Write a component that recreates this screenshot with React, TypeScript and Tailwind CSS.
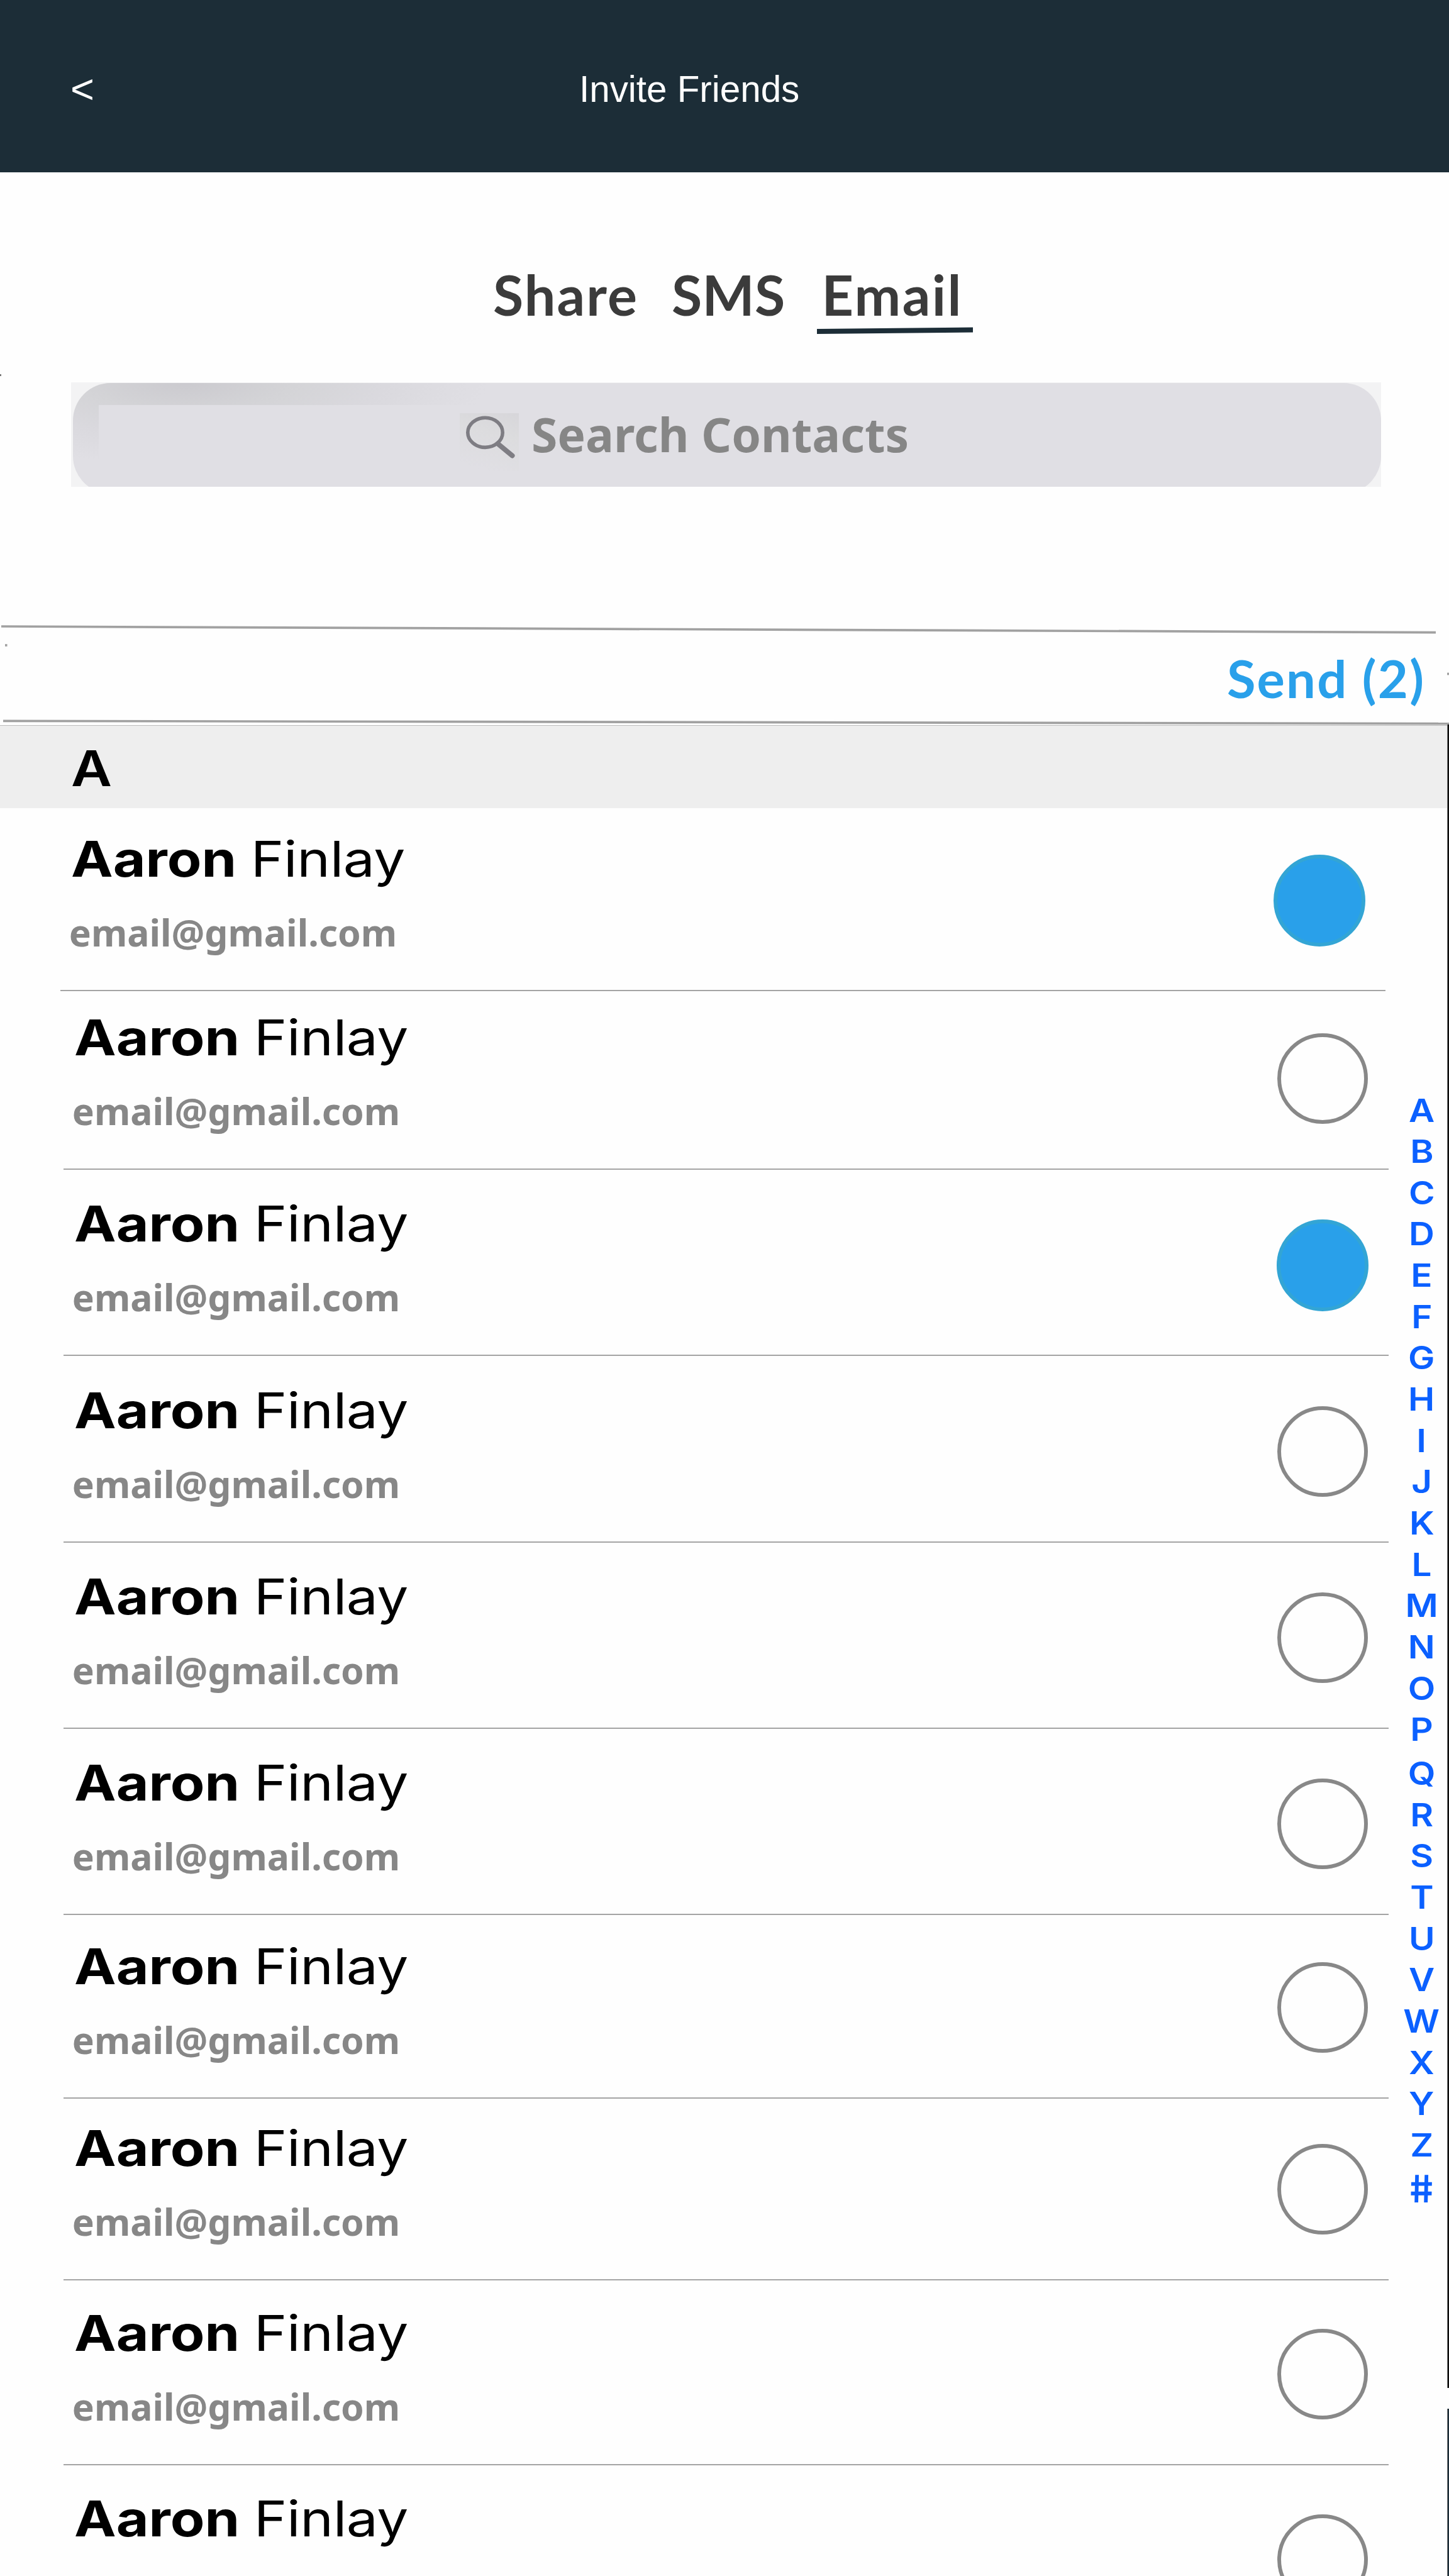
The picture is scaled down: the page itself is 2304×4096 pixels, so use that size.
type Contact = { first: string; last: string; email: string; selected: boolean; row: string };

const person = { first: "Aaron", last: "Finlay", email: "email@gmail.com" };

const contacts: Contact[] = [
  { ...person, selected: true, row: "ml-[96px] h-[291px]" },
  { ...person, selected: false, row: "ml-[101px] h-[284px]" },
  { ...person, selected: true, row: "ml-[101px] h-[296px]" },
  { ...person, selected: false, row: "ml-[101px] h-[297px]" },
  { ...person, selected: false, row: "ml-[101px] h-[296px]" },
  { ...person, selected: false, row: "ml-[101px] h-[296px]" },
  { ...person, selected: false, row: "ml-[101px] h-[292px]" },
  { ...person, selected: false, row: "ml-[101px] h-[289px]" },
  { ...person, selected: false, row: "ml-[101px] h-[294px]" },
  { ...person, selected: false, row: "ml-[101px] h-[295px]" },
];

const letters = "ABCDEFGHIJKLMNOPQRSTUVWXYZ#".split("");

function Header() {
  return (
    <header className="flex h-[273.5px] items-start bg-[#1c2d37] pt-[112px] font-['Liberation_Sans',sans-serif] leading-[60px] text-white">
      <button className="w-[920.7px] pl-[112px] text-left text-[65px] leading-[60px]">&lt;</button>
      <h1 className="origin-left scale-x-[0.9726] text-[60px] leading-[60px] whitespace-nowrap">Invite Friends</h1>
    </header>
  );
}

function Tabs() {
  return (
    <nav className="flex h-[334px] items-start pt-[150.5px] pl-[784px] font-['Lato',sans-serif] text-[88px] leading-[88px] font-bold text-[#3b3b3b]">
      <button className="w-[284px] text-left tracking-[2.1px]">Share</button>
      <button className="w-[238.5px] text-left tracking-[0.3px]">SMS</button>
      <button className="relative text-left tracking-[2.4px]">
        Email
        <svg className="absolute top-[96px] -left-[8px]" width="248" height="12" viewBox="0 0 248 12">
          <polygon points="0,3 248,0.6 248,8.6 0,11" fill="#1c2d37" />
        </svg>
      </button>
    </nav>
  );
}

function SearchField() {
  return (
    <div className="ml-[113px] flex h-[166px] w-[2083px] items-start overflow-hidden bg-[#f3f3f4] pt-[1px] pl-[3px]">
      <div className="h-[176px] w-[2080px] shrink-0 overflow-hidden rounded-[60px] bg-[#e0dfe4] bg-[radial-gradient(ellipse_480px_128px_at_180px_0px,#cbcacf_0%,#d4d4d7_35%,#dad9de_65%,rgba(224,223,228,0)_100%)] pt-[35px] pl-[41px]">
        <div className="flex h-[108px] w-[1700px] items-start bg-[#e0dfe4]">
          <div className="mt-[13.5px] ml-[574px] h-[92px] w-[94px] bg-[linear-gradient(195deg,#d7d6da_0%,#dcdcde_35%,#e0dfe4_90%)]">
            <svg width="94" height="92" viewBox="0 0 94 92" fill="none" stroke="#7e7d83">
              <ellipse cx="40.5" cy="30.8" rx="27.7" ry="23.6" strokeWidth="5.6" />
              <path d="M60.5 48.5 L83.5 67.5" strokeWidth="8" strokeLinecap="round" />
            </svg>
          </div>
          <span className="mt-[1.5px] ml-[20px] font-['Noto_Sans',sans-serif] text-[75px] leading-[90px] font-bold whitespace-nowrap text-[#868686]">
            Search Contacts
          </span>
        </div>
      </div>
    </div>
  );
}

function SendBar() {
  return (
    <div className="relative mt-[209.5px] h-[170px] pt-[52.5px] pl-[1951px]">
      <svg className="absolute inset-0" width="2304" height="170" viewBox="0 0 2304 170" fill="none" stroke="#a1a1a1" strokeWidth="3.7">
        <path d="M2 13 L2283 22.6" />
        <path d="M5 163.3 L2304 167.6" />
        <path d="M2301 88.5 H2304" />
        <path d="M8 43 H11.5" />
      </svg>
      <button className="block font-['Lato',sans-serif] text-[83px] leading-[84px] font-bold tracking-[2.2px] whitespace-nowrap text-[#29a0ea]">
        Send (2)
      </button>
    </div>
  );
}

function ContactRow({ contact }: { contact: Contact }) {
  return (
    <li className={`flex w-[2107px] items-end justify-between border-b-2 border-[#a4a4a4] ${contact.row}`}>
      <div className="flex flex-col gap-[46.5px] pb-[62.5px]">
        <p className="ml-[17.3px] origin-left scale-x-[1.145] text-[78px] leading-[78px] whitespace-nowrap text-black [word-spacing:-2.2px]">
          <span className="font-[650]">{contact.first}</span>{" "}
          <span className="tracking-[-0.35px]">{contact.last}</span>
        </p>
        <p className="ml-[13.8px] font-['Noto_Sans',sans-serif] text-[58.8px] leading-[60px] font-bold text-[#878787]">
          {contact.email}
        </p>
      </div>
      {contact.selected ? (
        <span className="mr-[32px] mb-[69.5px] size-[146px] rounded-full border-[6.5px] border-[#33a5d5] bg-[#29a0ea]" />
      ) : (
        <span className="mr-[33px] mb-[71px] size-[144.5px] rounded-full border-[6.5px] border-[#888888]" />
      )}
    </li>
  );
}

function AlphabetIndex() {
  return (
    <nav className="flex w-[93px] shrink-0 flex-col items-center pt-[447.5px] text-[51px] leading-[65.65px] font-semibold text-[#0b60ff]">
      {letters.map((l) => (
        <span
          key={l}
          className={
            l === "#"
              ? "mt-[4px] scale-x-[0.98] skew-x-[8deg] text-[60px]"
              : l === "Q"
                ? "mt-[4px] scale-x-[1.11]"
                : "scale-x-[1.11]"
          }
        >
          {l}
        </span>
      ))}
    </nav>
  );
}

export default function App() {
  return (
    <div className="relative h-[4096px] w-[2304px] overflow-hidden bg-[#fefefe] font-['Inter',sans-serif]">
      <Header />
      <Tabs />
      <SearchField />
      <SendBar />
      <h2 className="h-[132px] border-t border-[#bdbdbd] bg-[#eeeeee] pt-[29px] pl-[112.5px] text-[78px] leading-[78px] font-semibold text-black">
        <span className="inline-block origin-left scale-x-[1.145]">A</span>
      </h2>
      <div className="flex">
        <ul className="w-[2211px] mr-[3px] shrink-0">
          {contacts.map((c, i) => (
            <ContactRow key={i} contact={c} />
          ))}
        </ul>
        <AlphabetIndex />
      </div>
      <div className="absolute top-[1152px] right-0 h-[2644.5px] w-[3px] border-l border-[#777777] bg-[#0c0c0c]" />
      <div className="absolute top-[3830px] right-0 h-[266px] w-[3px] border-l border-[#777777] bg-[#1c2d37]" />
      <div className="absolute top-[595px] left-0 h-[3px] w-[1.5px] bg-[#777777]" />
    </div>
  );
}
